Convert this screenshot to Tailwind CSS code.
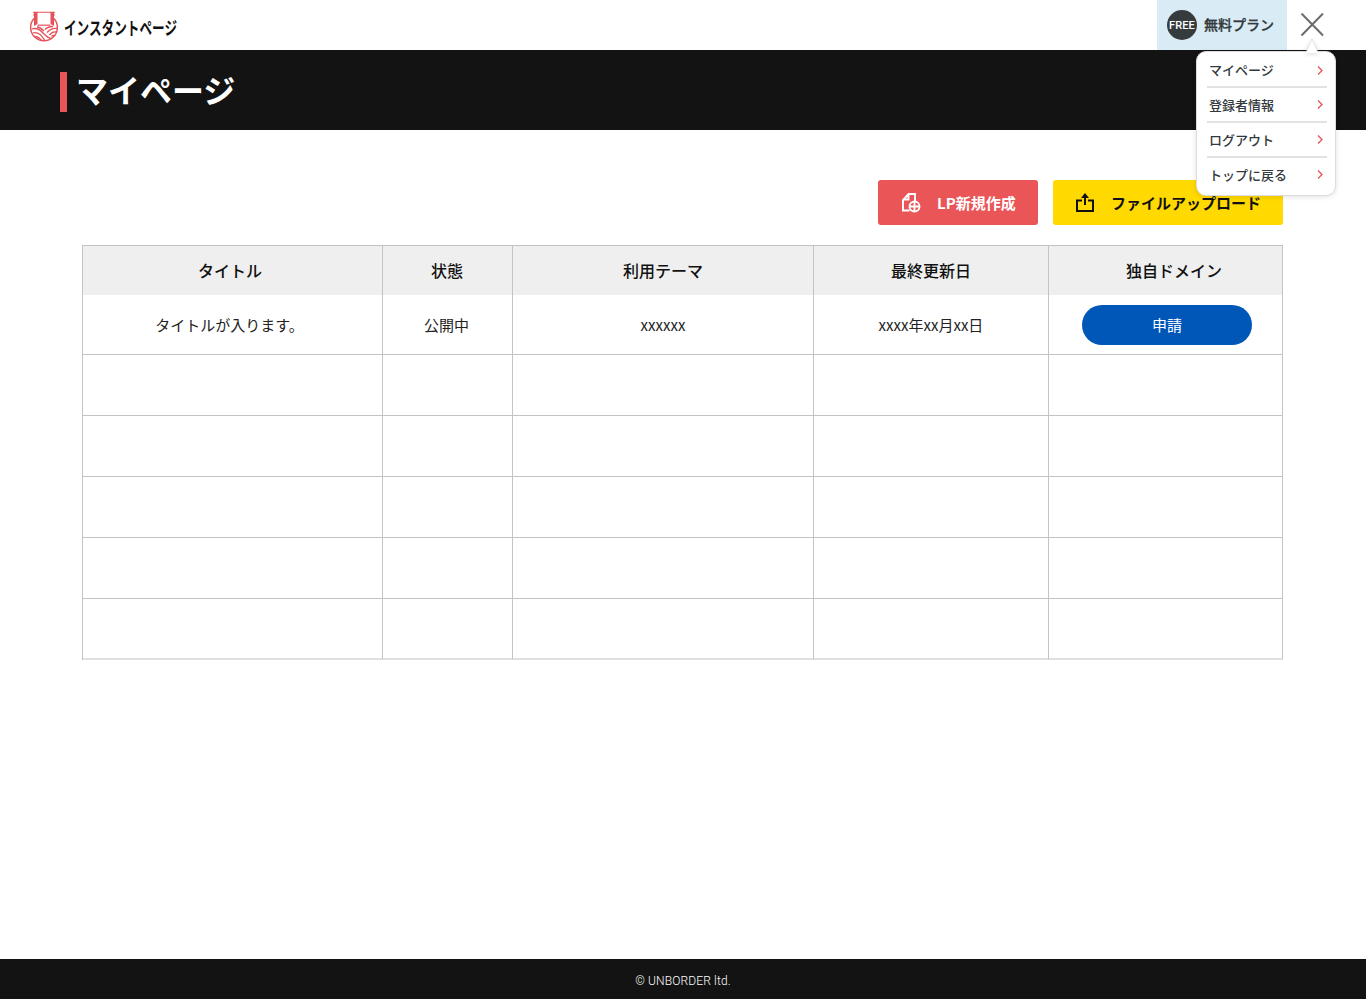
<!DOCTYPE html>
<html lang="ja">
<head>
<meta charset="utf-8">
<title>マイページ</title>
<script src="https://cdn.jsdelivr.net/npm/@tailwindcss/browser@4"></script>
</head>
<body class="bg-white text-[#111] font-['Noto_Sans_CJK_JP',sans-serif]">
<div class="flex h-[999px] w-[1366px] flex-col overflow-hidden">
  <header class="relative z-10 flex h-[50px] shrink-0 items-center bg-white pl-[29px]">
    <svg class="mt-[3px]" width="30" height="32" viewBox="0 0 30 32" fill="none" stroke="#e6525a">
      <path d="M4 1.200h22M4 4h4M22 4h4" stroke-width="1.1"/>
      <path d="M5 1h3.500v12L5 15zM21.500 1H25v14l-3.500-2z" fill="#e6525a" stroke="none"/>
      <path d="M5 7.500A13.400 13.400 0 1 0 25 7.500" stroke-width="1.400"/>
      <path d="M8.500 14.200h13" stroke-width="1.2"/>
      <path d="M2.500 18q7-2 12 4.500q5 5 8 5M3.500 22q7-2 12 7M5.500 25.500q4 0 7 4M28 17.500q-6-.5-10 4M27.500 21q-4-1-7 3M25.500 24.500q-2-.5-3 1M15 20q-4-4-7-4M16 18.500q3-3 8-3" stroke-width="1.3"/>
    </svg>
    <svg class="ml-[5px] mt-2 overflow-visible" width="116" height="30" viewBox="0 0 116 30">
      <text x="0" y="21" textLength="113" lengthAdjust="spacingAndGlyphs" font-size="18" font-weight="700" fill="#111">インスタントページ</text>
    </svg>
    <div class="ml-auto flex h-[50px] w-[130px] items-center bg-[#d9ecf5] pl-2.5">
      <span class="flex size-[30px] items-center justify-center rounded-full bg-[#363b3e] pt-0.5 font-['Roboto',sans-serif] text-[11px] font-medium tracking-[0.1px] text-white">FREE</span>
      <span class="-mt-0.5 ml-[7px] text-sm font-medium text-[#33393c] [-webkit-text-stroke:0.3px_#33393c]">無料プラン</span>
    </div>
    <button class="flex h-[50px] w-[79px] items-center pl-[13px]" aria-label="閉じる">
      <svg width="24" height="24" viewBox="0 0 24 24" stroke="#6b6b6b" stroke-width="2"><path d="M1.500 .5l21.500 22M23 .5L1.500 22.500"/></svg>
    </button>
    <nav class="absolute left-[1196px] top-[51px] h-[145px] w-[140px] rounded-[10px] border border-[#ddd] bg-white pl-2.5 pr-[8px] text-[13px] font-medium text-[#33393c] shadow-[0_1px_5px_rgba(0,0,0,0.12)]">
      <svg class="absolute left-[108px] top-[-14px] drop-shadow-sm" width="14" height="16" viewBox="0 0 14 16"><path d="M1 15L7 1l6 14z" fill="#fff"/><path d="M1 14L7 1l6 13" fill="none" stroke="#ddd" stroke-width=".7"/></svg>
      <a class="flex h-9 items-center justify-between border-b-2 border-[#e2e2e2] pl-0.5 pr-1 pt-0.5">マイページ<svg width="6" height="9" viewBox="0 0 6 9" fill="none" stroke="#e6525a" stroke-width="1.3"><path d="M1 .5l4 4-4 4"/></svg></a>
      <a class="flex h-[35px] items-center justify-between border-b-2 border-[#e2e2e2] pl-0.5 pr-1"><span>登録者情報</span><svg width="6" height="9" viewBox="0 0 6 9" fill="none" stroke="#e6525a" stroke-width="1.3"><path d="M1 .5l4 4-4 4"/></svg></a>
      <a class="flex h-[35px] items-center justify-between border-b-2 border-[#e2e2e2] pl-0.5 pr-1"><span>ログアウト</span><svg width="6" height="9" viewBox="0 0 6 9" fill="none" stroke="#e6525a" stroke-width="1.3"><path d="M1 .5l4 4-4 4"/></svg></a>
      <a class="flex h-[33px] items-center justify-between pl-0.5 pr-1"><span>トップに戻る</span><svg width="6" height="9" viewBox="0 0 6 9" fill="none" stroke="#e6525a" stroke-width="1.3"><path d="M1 .5l4 4-4 4"/></svg></a>
    </nav>
  </header>
  <div class="flex h-20 shrink-0 items-center bg-[#131313] pl-[60px] pt-1">
    <span class="h-10 w-[7px] bg-[#ea5558]"></span>
    <h1 class="-mt-1.5 ml-[9px] text-[32px] font-bold leading-10 text-white">マイページ</h1>
  </div>
  <main class="grow pl-[82px] pt-[50px]">
    <div class="flex w-[1201px] justify-end gap-[15px] text-[15px] font-bold">
      <button class="flex h-[45px] w-40 items-center rounded-[3px] bg-[#ea5558] pl-6 text-white">
        <svg width="19" height="20" viewBox="0 0 19 20" fill="none" stroke="#fff" stroke-width="1.9"><path d="M7.500 17.500H1V7L6.500 1H13v7M6.500 1v5.500H1"/><circle cx="12.500" cy="13.500" r="5"/><path d="M12.500 9v9M8 13.500h9"/></svg>
        <span class="ml-4 mt-0.5">LP新規作成</span>
      </button>
      <button class="flex h-[45px] w-[230px] items-center rounded-[3px] bg-[#ffd900] pl-[23px] text-[#111]">
        <svg width="18" height="20" viewBox="0 0 18 20" fill="none" stroke="#111" stroke-width="2"><path d="M6 7.500H1V18h16V7.500h-5M9 12V3"/><path d="M5 5L9 0l4 5z" fill="#111" stroke="none"/></svg>
        <span class="ml-[17px] mt-0.5">ファイルアップロード</span>
      </button>
    </div>
    <table class="mt-5 w-[1201px] table-fixed border-separate border-spacing-0 border-l border-t border-[#c4c4c4] text-center text-[15px] text-[#222] [&_td]:border-b [&_td]:border-r [&_td]:border-[#c4c4c4] [&_td]:p-0 [&_th]:border-r [&_th]:border-[#c4c4c4] [&_th]:p-0">
      <colgroup><col class="w-[300px]"><col class="w-[130px]"><col class="w-[301px]"><col class="w-[235px]"><col class="w-[234px]"></colgroup>
      <thead>
        <tr class="h-[49px] bg-[#efefef] text-base text-[#111] [&_th]:pb-0.5 [&_th]:font-medium">
          <th><span class="mr-[5px]">タイトル</span></th><th><span class="mr-px">状態</span></th><th>利用テーマ</th><th>最終更新日</th><th><span class="ml-[17px]">独自ドメイン</span></th>
        </tr>
      </thead>
      <tbody>
        <tr class="h-[60px]">
          <td><span class="relative top-px mr-[6px]">タイトルが入ります。</span></td><td><span class="relative top-px mr-0.5">公開中</span></td><td><span class="relative top-px">xxxxxx</span></td><td><span class="relative top-px">xxxx年xx月xx日</span></td>
          <td><button class="ml-[3px] block h-10 w-[170px] translate-x-[30px] rounded-full bg-[#0057b8] pt-0.5 text-white">申請</button></td>
        </tr>
        <tr class="h-[61px]"><td></td><td></td><td></td><td></td><td></td></tr>
        <tr class="h-[61px]"><td></td><td></td><td></td><td></td><td></td></tr>
        <tr class="h-[61px]"><td></td><td></td><td></td><td></td><td></td></tr>
        <tr class="h-[61px]"><td></td><td></td><td></td><td></td><td></td></tr>
        <tr class="h-[61px] [&>td]:border-b-2 [&>td]:border-b-[#e0e0e0]"><td></td><td></td><td></td><td></td><td></td></tr>
      </tbody>
    </table>
  </main>
  <footer class="flex h-10 shrink-0 items-center justify-center bg-[#131313] pt-1 font-['Roboto',sans-serif] text-xs font-light tracking-[0.15px] text-white">© UNBORDER ltd.</footer>
</div>
</body>
</html>
